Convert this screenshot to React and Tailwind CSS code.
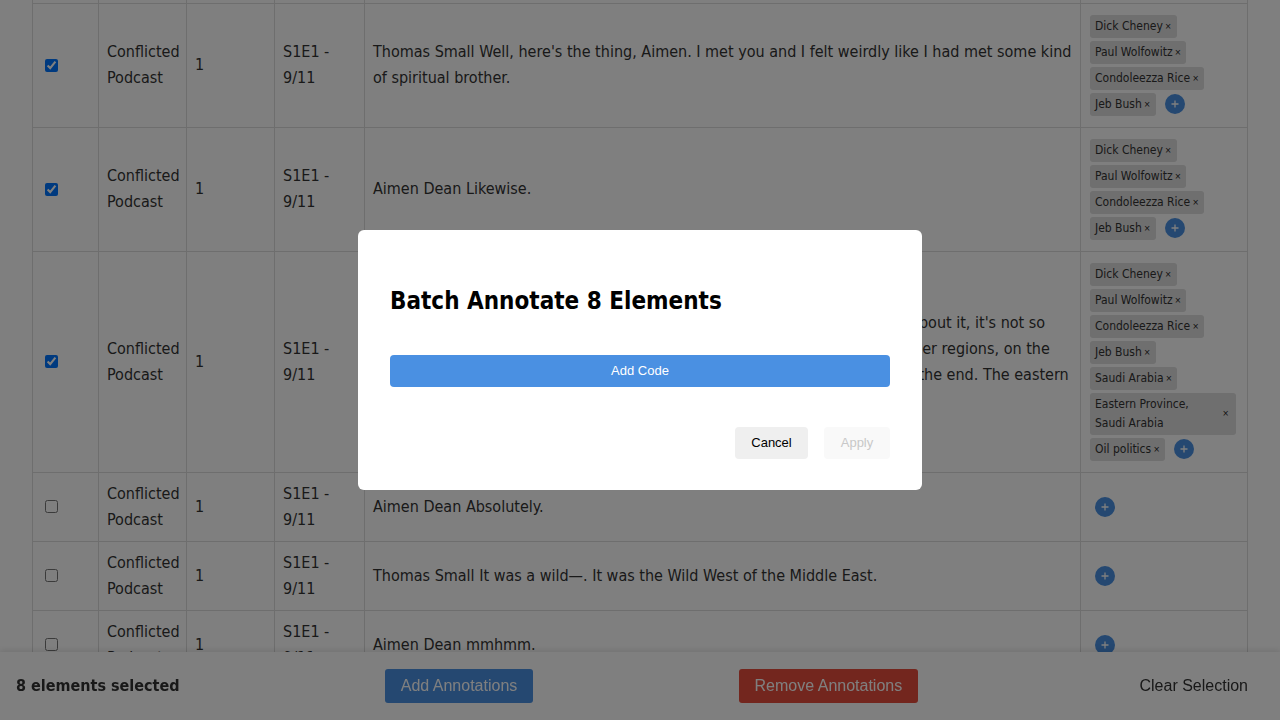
import React from 'react';

const sans = "font-['DejaVu_Sans_Condensed','DejaVu_Sans',sans-serif]";
const arial = "font-['Liberation_Sans',Arial,sans-serif]";

const rows = [
  {
    checked: true,
    text: "Thomas Small Well, here's the thing, Aimen. I met you and I felt weirdly like I had met some kind of spiritual brother.",
    tags: ['Dick Cheney', 'Paul Wolfowitz', 'Condoleezza Rice', 'Jeb Bush'],
  },
  {
    checked: true,
    text: 'Aimen Dean Likewise.',
    tags: ['Dick Cheney', 'Paul Wolfowitz', 'Condoleezza Rice', 'Jeb Bush'],
  },
  {
    checked: true,
    lines: [
      "Aimen Dean Yeah. The Eastern Province, people forget that when you talk about it, it's not so",
      'simple. It was a mixture of communities, tribes, families who came from other regions, on the',
      'Gulf side, from Bahrain, from Oman, from Kuwait, and from Iraq and Iran in the end. The eastern',
      'province was unique.',
    ],
    tags: [
      'Dick Cheney',
      'Paul Wolfowitz',
      'Condoleezza Rice',
      'Jeb Bush',
      'Saudi Arabia',
      'Eastern Province, Saudi Arabia',
      'Oil politics',
    ],
  },
  { checked: false, text: 'Aimen Dean Absolutely.', tags: [] },
  { checked: false, text: 'Thomas Small It was a wild—. It was the Wild West of the Middle East.', tags: [] },
  { checked: false, text: 'Aimen Dean mmhmm.', tags: [] },
];

const PlusButton = ({ className = '' }) => (
  <button className={`w-[20px] h-[20px] rounded-full bg-[#4a90e2] flex items-center justify-center shrink-0 ${className}`}>
    <svg width="8" height="8" viewBox="0 0 8 8">
      <path d="M4 0.5v7M0.5 4h7" stroke="white" strokeWidth="1.3" />
    </svg>
  </button>
);

const Tag = ({ label }) => {
  const wide = label.length > 20;
  return (
    <span
      className={`flex items-center bg-[#dedede] rounded-[3px] pl-[5px] pr-[5px] py-[2px] text-[12px] leading-[19px] text-[#333] ${
        wide ? 'w-[146px]' : ''
      }`}
    >
      <span className={wide ? 'max-w-[112px]' : ''}>{label}</span>
      <span className={`text-[9px] leading-none text-[#222] ${wide ? 'ml-auto mr-[2px]' : 'ml-[2px]'}`}>×</span>
    </span>
  );
};

const cell = 'border border-[#dcdcdc] px-[8px] py-[8px] align-middle';

export default function App() {
  return (
    <div className={`relative h-screen overflow-hidden bg-white text-[16px] leading-[26px] text-[#333] ${sans}`}>
      <div className="px-[32px]">
        <table className="w-full table-fixed border-collapse">
          <colgroup>
            <col className="w-[66px]" />
            <col className="w-[88px]" />
            <col className="w-[88px]" />
            <col className="w-[90px]" />
            <col />
            <col className="w-[167px]" />
          </colgroup>
          <tbody>
            <tr className="h-[3px]">
              <td className="border-x border-b border-[#dcdcdc] p-0"></td>
              <td className="border-x border-b border-[#dcdcdc] p-0"></td>
              <td className="border-x border-b border-[#dcdcdc] p-0"></td>
              <td className="border-x border-b border-[#dcdcdc] p-0"></td>
              <td className="border-x border-b border-[#dcdcdc] p-0"></td>
              <td className="border-x border-b border-[#dcdcdc] p-0"></td>
            </tr>
            {rows.map((row, i) => (
              <tr key={i}>
                <td className={`${cell} pl-[12px]`}>
                  <input type="checkbox" checked={row.checked} readOnly className="block w-[13px] h-[13px] m-0" />
                </td>
                <td className={cell}>Conflicted Podcast</td>
                <td className={cell}>1</td>
                <td className={cell}>S1E1 - 9/11</td>
                <td className={`${cell} overflow-hidden`}>
                  {row.lines
                    ? row.lines.map((l, j) => (
                        <span key={j} className="block whitespace-nowrap">
                          {l}
                        </span>
                      ))
                    : row.text}
                </td>
                <td className={cell}>
                  <div className="flex flex-wrap items-center gap-x-[4px] gap-y-[3px] py-[3px] pl-[1px]">
                    {row.tags.map((t) => (
                      <Tag key={t} label={t} />
                    ))}
                    <PlusButton className="ml-[5px]" />
                  </div>
                </td>
              </tr>
            ))}
          </tbody>
        </table>
      </div>

      {/* selection bar */}
      <div className="fixed bottom-0 left-0 right-0 h-[68px] bg-white shadow-[0_-2px_6px_rgba(0,0,0,0.1)] flex items-center justify-between px-[16px]">
        <span className="font-bold text-[16px] text-[#333]">8 elements selected</span>
        <button className={`h-[34px] px-[16px] rounded-[3px] bg-[#4a90e2] text-white text-[16px] ${arial}`}>
          Add Annotations
        </button>
        <button className={`h-[34px] px-[16px] rounded-[3px] bg-[#e74c3c] text-white text-[16px] ${arial}`}>
          Remove Annotations
        </button>
        <button className={`h-[34px] px-[16px] text-[#333] text-[16px] ${arial}`}>Clear Selection</button>
      </div>

      {/* modal */}
      <div className="fixed inset-0 bg-black/50 flex items-center justify-center">
        <div className="w-[564px] h-[260px] bg-white rounded-[6px] px-[32px] pt-[24px]">
          <h2 className="text-[24px] leading-[30px] font-bold text-black mt-[32px] mb-[39px]">
            Batch Annotate 8 Elements
          </h2>
          <button className={`w-full h-[32px] rounded-[4px] bg-[#4a90e2] text-white text-[13px] ${arial}`}>
            Add Code
          </button>
          <div className="flex justify-end gap-[16px] mt-[40px]">
            <button className={`w-[73px] h-[32px] rounded-[4px] bg-[#efefef] text-black text-[13px] ${arial}`}>
              Cancel
            </button>
            <button className={`w-[66px] h-[32px] rounded-[4px] bg-[#f9f9f9] text-[#c8c8c8] text-[13px] ${arial}`}>
              Apply
            </button>
          </div>
        </div>
      </div>
    </div>
  );
}
